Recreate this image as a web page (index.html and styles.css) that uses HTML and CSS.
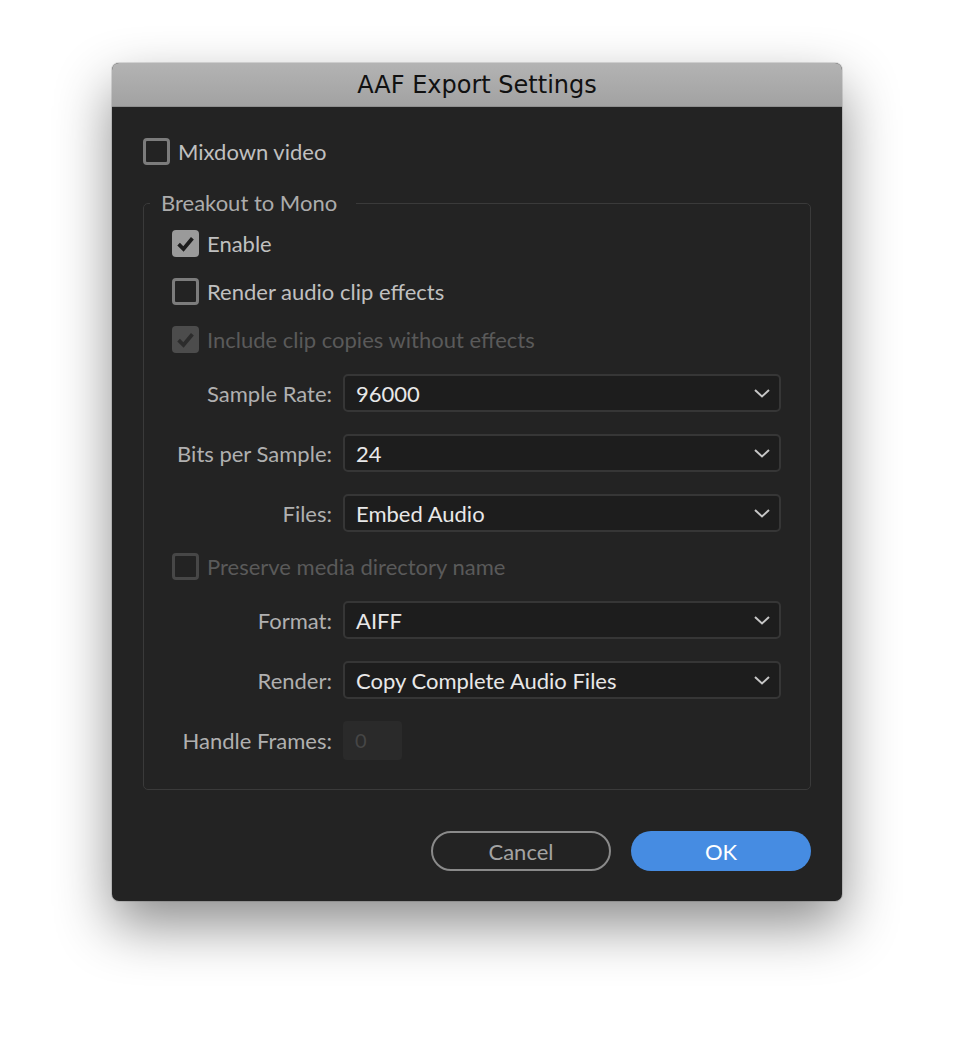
FILE: index.html
```html
<!DOCTYPE html>
<html>
<head>
    <meta charset="utf-8" />
    <title>AAF Export Settings</title>
    <link rel="stylesheet" href="styles.css">
</head>
<body>
    <div class="window">
        <div class="titlebar">AAF Export Settings</div>

        <div class="content">
            <div class="check-row">
                <span class="box"></span>
                <span class="check-label">Mixdown video</span>
            </div>

            <fieldset class="group">
                <legend>Breakout to Mono</legend>

                <div class="check-row">
                    <span class="box checked">
                        <svg viewBox="0 0 16 16"><path d="M3.2 8.4 L6.6 11.8 L12.8 4.4" /></svg>
                    </span>
                    <span class="check-label">Enable</span>
                </div>

                <div class="check-row">
                    <span class="box"></span>
                    <span class="check-label">Render audio clip effects</span>
                </div>

                <div class="check-row disabled">
                    <span class="box checked">
                        <svg viewBox="0 0 16 16"><path d="M3.2 8.4 L6.6 11.8 L12.8 4.4" /></svg>
                    </span>
                    <span class="check-label">Include clip copies without effects</span>
                </div>

                <div class="field-row">
                    <label>Sample Rate:</label>
                    <div class="select">
                        <span>96000</span>
                        <svg class="chevron" viewBox="0 0 16 9"><path d="M1 1 L8 7.5 L15 1" /></svg>
                    </div>
                </div>

                <div class="field-row">
                    <label>Bits per Sample:</label>
                    <div class="select">
                        <span>24</span>
                        <svg class="chevron" viewBox="0 0 16 9"><path d="M1 1 L8 7.5 L15 1" /></svg>
                    </div>
                </div>

                <div class="field-row">
                    <label>Files:</label>
                    <div class="select">
                        <span>Embed Audio</span>
                        <svg class="chevron" viewBox="0 0 16 9"><path d="M1 1 L8 7.5 L15 1" /></svg>
                    </div>
                </div>

                <div class="check-row disabled">
                    <span class="box"></span>
                    <span class="check-label">Preserve media directory name</span>
                </div>

                <div class="field-row">
                    <label>Format:</label>
                    <div class="select">
                        <span>AIFF</span>
                        <svg class="chevron" viewBox="0 0 16 9"><path d="M1 1 L8 7.5 L15 1" /></svg>
                    </div>
                </div>

                <div class="field-row">
                    <label>Render:</label>
                    <div class="select">
                        <span>Copy Complete Audio Files</span>
                        <svg class="chevron" viewBox="0 0 16 9"><path d="M1 1 L8 7.5 L15 1" /></svg>
                    </div>
                </div>

                <div class="field-row">
                    <label>Handle Frames:</label>
                    <div class="number-input">0</div>
                </div>
            </fieldset>

            <div class="buttons">
                <button class="btn cancel">Cancel</button>
                <button class="btn ok">OK</button>
            </div>
        </div>
    </div>
</body>
</html>
```

FILE: styles.css
```css
html {
    background-color: #FFF;
}

body {
    margin: 0;
    min-height: 1062px;
    font-family: Lato, "Open Sans", sans-serif;
    display: flex;
    justify-content: center;
    align-items: flex-start;
}

div.window {
    width: 730px;
    margin-top: 63px;
    background-color: #232323;
    border-radius: 7px;
    overflow: hidden;
    box-shadow: 0 24px 55px rgba(0, 0, 0, 0.45), 0 0 0 1px rgba(0, 0, 0, 0.12);
}

div.titlebar {
    height: 44px;
    box-sizing: border-box;
    border-bottom: 1px solid #8e8e8e;
    background: linear-gradient(#b3b3b3, #a2a2a2);
    color: #111;
    font-family: "DejaVu Sans", sans-serif;
    font-size: 24px;
    line-height: 45px;
    text-align: center;
}

div.content {
    padding: 31px 31px 30px 31px;
}

div.check-row {
    display: flex;
    align-items: center;
    height: 27px;
}

span.box {
    width: 27px;
    height: 27px;
    box-sizing: border-box;
    border: 3px solid #7c7c7c;
    border-radius: 4px;
    display: flex;
    align-items: center;
    justify-content: center;
    flex-shrink: 0;
}

span.box.checked {
    border: none;
    background-color: #9a9a9a;
}

span.box svg {
    width: 23px;
    height: 23px;
}

span.box svg path {
    fill: none;
    stroke: #1c1c1c;
    stroke-width: 2.6;
}

span.check-label {
    margin-left: 8px;
    font-size: 22px;
    color: #c0c0c0;
}

div.check-row.disabled span.box {
    border-color: #474747;
}

div.check-row.disabled span.box.checked {
    background-color: #4c4c4c;
}

div.check-row.disabled span.box svg path {
    stroke: #2c2c2c;
}

div.check-row.disabled span.check-label {
    color: #5a5a5a;
}

fieldset.group {
    margin: 24px 0 0 0;
    padding: 13px 29px 29px 28px;
    border: 1px solid #3a3a3a;
    border-radius: 5px;
}

fieldset.group legend {
    margin-left: -22px;
    padding: 0 19px 0 11px;
    height: 28px;
    line-height: 28px;
    font-size: 22px;
    color: #acacac;
}

fieldset.group div.check-row + div.check-row {
    margin-top: 21px;
}

div.field-row {
    display: flex;
    align-items: center;
    margin-top: 22px;
}

fieldset.group div.check-row + div.field-row {
    margin-top: 21px;
}

fieldset.group div.field-row + div.check-row {
    margin-top: 21px;
}

div.field-row label {
    width: 160px;
    margin-right: 11px;
    text-align: right;
    font-size: 22px;
    color: #b0b0b0;
}

div.select {
    flex: 1;
    height: 38px;
    box-sizing: border-box;
    border: 2px solid #363636;
    border-radius: 5px;
    background-color: #1d1d1d;
    display: flex;
    align-items: center;
    justify-content: space-between;
    padding: 0 9px 0 11px;
    font-size: 22px;
    color: #e8e8e8;
}

svg.chevron {
    width: 16px;
    height: 9px;
}

svg.chevron path {
    fill: none;
    stroke: #c6c6c6;
    stroke-width: 2;
}

div.number-input {
    width: 59px;
    height: 39px;
    box-sizing: border-box;
    border-radius: 4px;
    background-color: #2a2a2a;
    padding-left: 12px;
    line-height: 39px;
    font-size: 20px;
    color: #464646;
}

div.buttons {
    display: flex;
    justify-content: flex-end;
    gap: 20px;
    margin-top: 41px;
}

button.btn {
    width: 180px;
    height: 40px;
    border-radius: 20px;
    font-family: Lato, "Open Sans", sans-serif;
    font-size: 22px;
    cursor: pointer;
}

button.cancel {
    background-color: transparent;
    border: 2px solid #8a8a8a;
    color: #a3a3a3;
}

button.ok {
    background-color: #468ce2;
    border: none;
    color: #FFF;
}
```
